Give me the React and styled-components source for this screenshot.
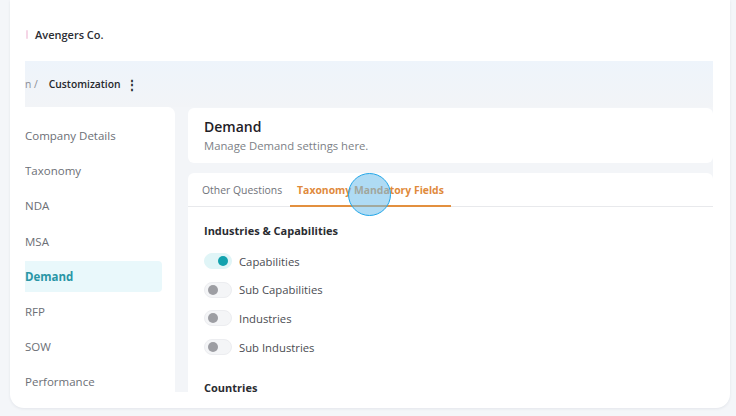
import React from "react";
import styled, { createGlobalStyle } from "styled-components";

const GlobalStyle = createGlobalStyle`
  html, body {
    margin: 0;
    padding: 0;
    background: #f4f6f9;
    font-family: "Open Sans", "Liberation Sans", sans-serif;
    overflow: hidden;
  }
  * { box-sizing: border-box; }
`;

const menu = [
  "Company Details",
  "Taxonomy",
  "NDA",
  "MSA",
  "Demand",
  "RFP",
  "SOW",
  "Performance",
];

const fields = [
  { label: "Capabilities", on: true },
  { label: "Sub Capabilities", on: false },
  { label: "Industries", on: false },
  { label: "Sub Industries", on: false },
];

export default function App() {
  return (
    <>
      <GlobalStyle />
      <Page>
        <Shell>
          <TopBar>
            <OrgMark />
            <OrgName>Avengers Co.</OrgName>
          </TopBar>
          <Crumbs>
            <CrumbPrev>n /</CrumbPrev>
            <CrumbCurrent>Customization</CrumbCurrent>
            <Kebab>⋮</Kebab>
          </Crumbs>
          <Body>
            <Sidebar>
              {menu.map((m) => (
                <MenuItem key={m} active={m === "Demand"}>
                  {m}
                </MenuItem>
              ))}
            </Sidebar>
            <Main>
              <HeadCard>
                <Title>Demand</Title>
                <Subtitle>Manage Demand settings here.</Subtitle>
              </HeadCard>
              <TabCard>
                <Tabs>
                  <Tab>Other Questions</Tab>
                  <Tab active>
                    Taxonomy Mandatory Fields
                    <Cursor />
                  </Tab>
                </Tabs>
                <Section>
                  <SectionTitle>Industries &amp; Capabilities</SectionTitle>
                  <ToggleList>
                    {fields.map((f) => (
                      <ToggleRow key={f.label}>
                        <Track on={f.on}>
                          <Knob on={f.on} />
                        </Track>
                        <ToggleLabel>{f.label}</ToggleLabel>
                      </ToggleRow>
                    ))}
                  </ToggleList>
                  <SectionTitle>Countries</SectionTitle>
                </Section>
              </TabCard>
            </Main>
          </Body>
        </Shell>
      </Page>
    </>
  );
}

const Page = styled.div`
  width: 736px;
  height: 416px;
  padding: 0 6px 8px 10px;
`;

const Shell = styled.div`
  height: 408px;
  background: #fff;
  border-radius: 0 0 14px 14px;
  box-shadow: 0 1px 3px rgba(30, 40, 60, 0.08);
  padding: 0 17px 16px 15px;
  display: flex;
  flex-direction: column;
  overflow: hidden;
`;

const TopBar = styled.div`
  height: 61px;
  display: flex;
  align-items: center;
  gap: 7px;
  padding-top: 7px;
  padding-left: 1px;
`;

const OrgMark = styled.span`
  width: 2px;
  height: 9px;
  background: #f5d6e6;
  border-radius: 1px;
`;

const OrgName = styled.span`
  font-size: 11px;
  font-weight: 600;
  color: #2b2d33;
`;

const Crumbs = styled.div`
  height: 46px;
  background: linear-gradient(#eef4fb, #f2f4f7);
  display: flex;
  align-items: center;
  font-size: 10.3px;
`;

const CrumbPrev = styled.span`
  color: #8a8d94;
  margin-right: 11px;
`;

const CrumbCurrent = styled.span`
  color: #25272c;
  font-weight: 600;
  margin-right: 5px;
`;

const Kebab = styled.span`
  color: #25272c;
  font-weight: 700;
  font-size: 12px;
`;

const Body = styled.div`
  flex: 1;
  min-height: 0;
  background: #f3f5f8;
  display: grid;
  grid-template-columns: 150px 1fr;
  gap: 13px;
  overflow: hidden;
`;

const Sidebar = styled.div`
  background: #fff;
  border-radius: 0 7px 0 0;
  padding: 13px 13px 0 0;
  display: flex;
  flex-direction: column;
  gap: 4px;
`;

const MenuItem = styled.div`
  height: 31.2px;
  display: flex;
  align-items: center;
  font-size: 11.5px;
  color: ${(p) => (p.active ? "#2996a6" : "#6c6f76")};
  font-weight: ${(p) => (p.active ? 700 : 400)};
  background: ${(p) => (p.active ? "#e9f8fb" : "transparent")};
  border-radius: 0 4px 4px 0;
`;

const Main = styled.div`
  padding-top: 1px;
  display: flex;
  flex-direction: column;
  gap: 10px;
`;

const HeadCard = styled.div`
  background: #fff;
  border-radius: 6px;
  height: 55px;
  padding: 10px 16px;
  display: flex;
  flex-direction: column;
  gap: 2px;
`;

const Title = styled.div`
  font-size: 14px;
  font-weight: 600;
  color: #1e2026;
  line-height: 18px;
`;

const Subtitle = styled.div`
  font-size: 11.3px;
  color: #7c7f86;
  line-height: 15px;
`;

const TabCard = styled.div`
  flex: 1;
  background: #fff;
  border-radius: 6px 6px 0 0;
`;

const Tabs = styled.div`
  display: flex;
  padding: 0 8px 0 7px;
  gap: 1px;
  border-bottom: 1px solid #e8e9ec;
  height: 34px;
`;

const Tab = styled.div`
  position: relative;
  padding: 10px 7px 0;
  font-size: 10.4px;
  font-weight: ${(p) => (p.active ? 700 : 400)};
  color: ${(p) => (p.active ? "#df8a3c" : "#70737a")};
  border-bottom: 2px solid ${(p) => (p.active ? "#e3903f" : "transparent")};
  margin-bottom: -1px;
`;

const Cursor = styled.span`
  position: absolute;
  left: 58px;
  top: 0px;
  width: 43px;
  height: 43px;
  border-radius: 50%;
  background: rgba(110, 190, 235, 0.55);
  border: 1.5px solid #23a6e8;
  pointer-events: none;
`;

const Section = styled.div`
  padding: 16px 16px 0;
`;

const SectionTitle = styled.div`
  font-size: 11px;
  font-weight: 700;
  color: #2a2c31;
  line-height: 16px;
`;

const ToggleList = styled.div`
  display: flex;
  flex-direction: column;
  gap: 12.7px;
  padding: 14px 0 25px;
`;

const ToggleRow = styled.div`
  display: flex;
  align-items: center;
  gap: 7px;
  height: 16px;
`;

const Track = styled.span`
  width: 28px;
  height: 16px;
  border-radius: 8px;
  background: ${(p) => (p.on ? "#e0f5f7" : "#f4f5f7")};
  border: 1px solid ${(p) => (p.on ? "#e0f5f7" : "#ecedf0")};
  display: flex;
  align-items: center;
  justify-content: ${(p) => (p.on ? "flex-end" : "flex-start")};
  padding: 0 3px;
`;

const Knob = styled.span`
  width: 10px;
  height: 10px;
  border-radius: 50%;
  background: ${(p) => (p.on ? "#12a2ae" : "#9d9ea3")};
`;

const ToggleLabel = styled.span`
  font-size: 11.3px;
  color: #4a4c52;
`;
